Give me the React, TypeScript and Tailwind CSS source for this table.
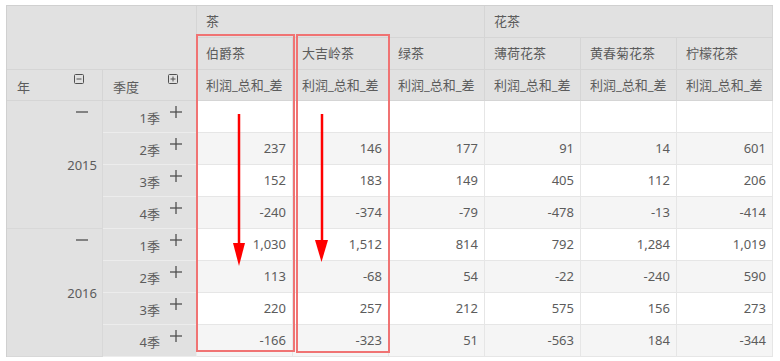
import React from 'react';

const teas = ['伯爵茶', '大吉岭茶', '绿茶', '薄荷花茶', '黄春菊花茶', '柠檬花茶'];

const years: { year: string; rows: string[][] }[] = [
  {
    year: '2015',
    rows: [
      ['', '', '', '', '', ''],
      ['237', '146', '177', '91', '14', '601'],
      ['152', '183', '149', '405', '112', '206'],
      ['-240', '-374', '-79', '-478', '-13', '-414'],
    ],
  },
  {
    year: '2016',
    rows: [
      ['1,030', '1,512', '814', '792', '1,284', '1,019'],
      ['113', '-68', '54', '-22', '-240', '590'],
      ['220', '257', '212', '575', '156', '273'],
      ['-166', '-323', '51', '-563', '184', '-344'],
    ],
  },
];

const Minus = () => (
  <svg width="12" height="12" viewBox="0 0 12 12" className="block">
    <line x1="0" y1="6" x2="12" y2="6" stroke="#505050" strokeWidth="1.3" />
  </svg>
);

const Plus = () => (
  <svg width="12" height="12" viewBox="0 0 12 12" className="block">
    <line x1="0" y1="6" x2="12" y2="6" stroke="#505050" strokeWidth="1.3" />
    <line x1="6" y1="0" x2="6" y2="12" stroke="#505050" strokeWidth="1.3" />
  </svg>
);

const BoxIcon = ({ plus }: { plus?: boolean }) => (
  <svg width="10" height="10" viewBox="0 0 10 10" className="block">
    <rect x="0.5" y="0.5" width="9" height="9" rx="1" fill="none" stroke="#505050" strokeWidth="1" />
    <line x1="2.5" y1="5" x2="7.5" y2="5" stroke="#505050" strokeWidth="1" />
    {plus && <line x1="5" y1="2.5" x2="5" y2="7.5" stroke="#505050" strokeWidth="1" />}
  </svg>
);

const hd = 'bg-[#e1e1e1] border-r border-b border-[#d5d5d5]';

const App: React.FC = () => {
  return (
    <div
      className="relative w-[780px] h-[361px] bg-white pt-[5px] pl-[6px] text-[13px] text-[#5c5c5c]"
      style={{ fontFamily: '"Noto Sans", "Noto Sans CJK SC", sans-serif' }}
    >
      <div className="grid grid-cols-[96px_94px_repeat(6,96px)] grid-rows-[32px_32px_31px_repeat(8,32px)] border-l border-t border-[#d0d0d0] w-max">
        {/* header */}
        <div className={`${hd} col-span-2 row-span-2`} />
        <div className={`${hd} col-span-3 flex items-center pl-[9px]`}>茶</div>
        <div className={`${hd} col-span-3 flex items-center pl-[9px]`}>花茶</div>
        {teas.map((t) => (
          <div key={t} className={`${hd} flex items-center pl-[9px]`}>{t}</div>
        ))}
        <div className={`${hd} flex justify-between pl-[10px] pr-[18px]`}>
          <span className="mt-[8px]">年</span>
          <span className="mt-[4px]"><BoxIcon /></span>
        </div>
        <div className={`${hd} flex justify-between pl-[10px] pr-[18px]`}>
          <span className="mt-[8px]">季度</span>
          <span className="mt-[4px]"><BoxIcon plus /></span>
        </div>
        {teas.map((t) => (
          <div key={t + 'm'} className={`${hd} flex items-center pl-[9px] pt-[2px]`}>利润_总和_差</div>
        ))}

        {/* body */}
        {years.map((y) => (
          <React.Fragment key={y.year}>
            <div className="row-span-4 relative bg-[#e1e1e1] border-r border-b border-[#d8d8d8] flex items-center justify-end pr-[5px]">
              <span className="absolute left-[69px] top-[5px]"><Minus /></span>
              <span className="translate-y-[1px]">{y.year}</span>
            </div>
            {y.rows.map((r, qi) => (
              <React.Fragment key={qi}>
                <div className="bg-[#e1e1e1] border-r border-b border-[#ececec] flex items-center justify-end pr-[14px]">
                  <span className="translate-y-[2px]">{qi + 1}季</span>
                  <span className="ml-[10px] -translate-y-[5px]"><Plus /></span>
                </div>
                {r.map((v, ci) => (
                  <div
                    key={ci}
                    className={`${qi % 2 === 0 ? 'bg-white' : 'bg-[#f5f5f5]'} border-r border-b border-[#e6e6e6] flex items-center justify-end pr-[6px]`}
                  >
                    {v}
                  </div>
                ))}
              </React.Fragment>
            ))}
          </React.Fragment>
        ))}
      </div>

      {/* annotation overlay */}
      <svg className="absolute left-0 top-0 pointer-events-none" width="780" height="361" viewBox="0 0 780 361">
        <rect x="197" y="35" width="97" height="316" fill="none" stroke="#f07373" strokeWidth="2" />
        <rect x="297" y="35" width="92" height="317" fill="none" stroke="#f07373" strokeWidth="2" />
        <line x1="239" y1="114" x2="239" y2="246" stroke="#ff0000" strokeWidth="2.5" />
        <polygon points="233,243 245,243 239,266" fill="#ff0000" />
        <line x1="322" y1="114" x2="322" y2="243" stroke="#ff0000" strokeWidth="2.5" />
        <polygon points="315,240 328,240 321.5,262" fill="#ff0000" />
      </svg>
    </div>
  );
};

export default App;
